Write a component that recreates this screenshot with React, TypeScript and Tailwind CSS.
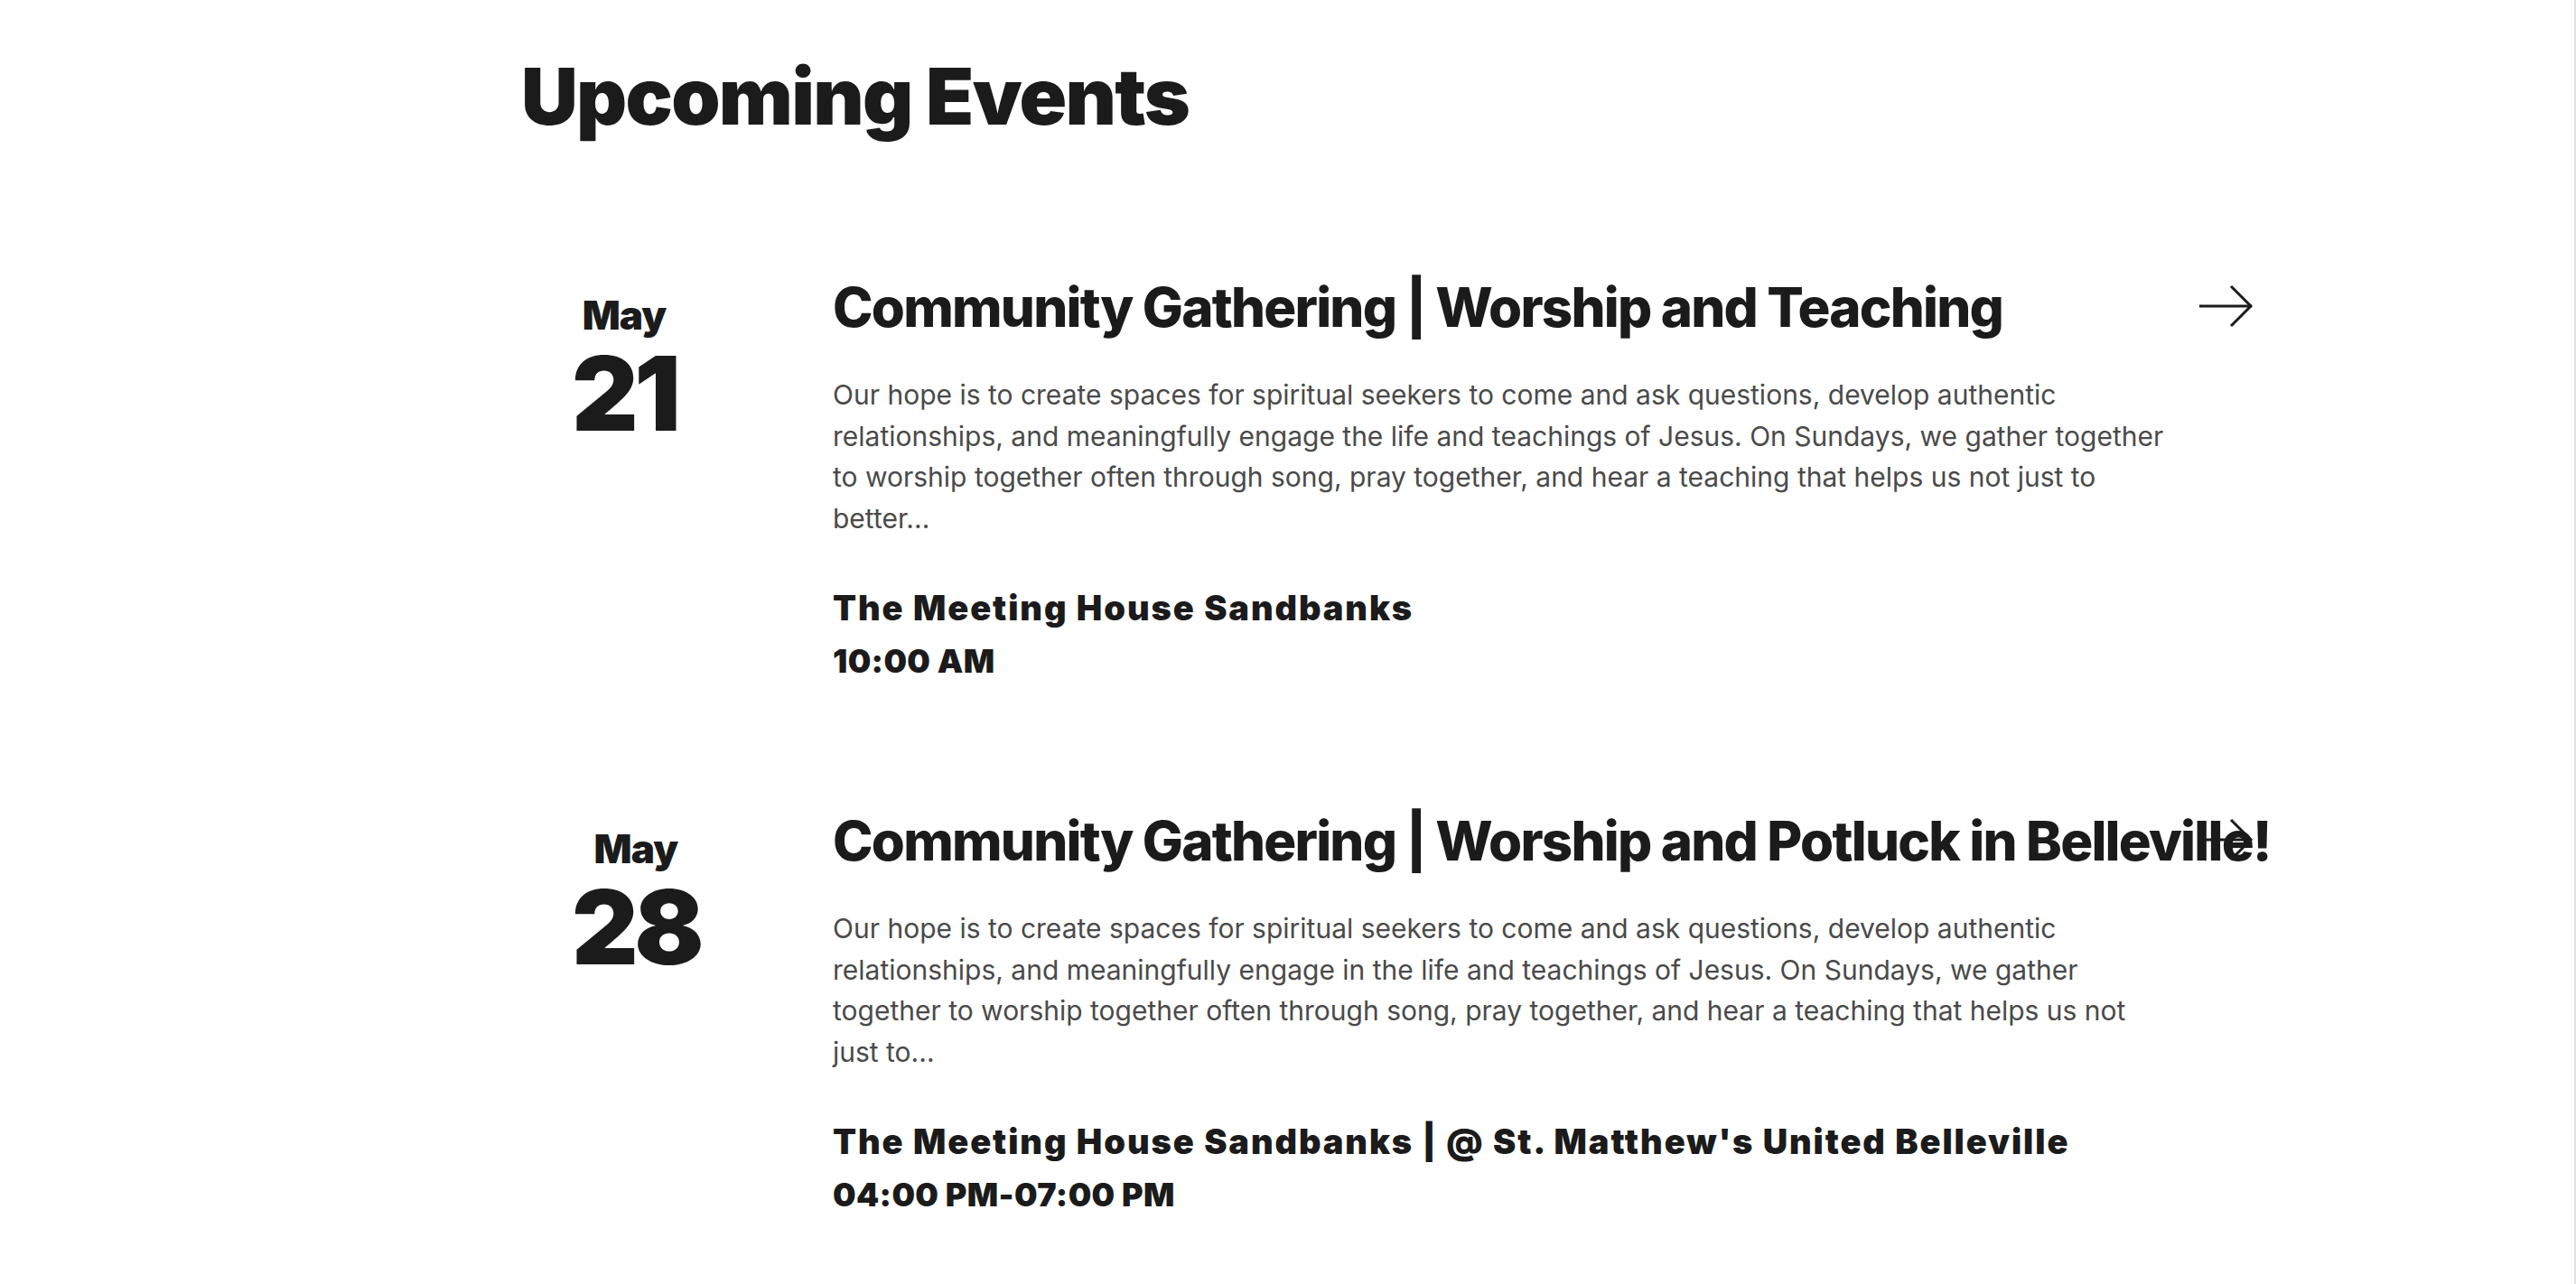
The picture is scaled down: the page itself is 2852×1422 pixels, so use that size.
import React from "react";

const events = [
  {
    month: "May",
    day: "21",
    title: "Community Gathering | Worship and Teaching",
    body: "Our hope is to create spaces for spiritual seekers to come and ask questions, develop authentic relationships, and meaningfully engage the life and teachings of Jesus. On Sundays, we gather together to worship together often through song, pray together, and hear a teaching that helps us not just to better...",
    place: "The Meeting House Sandbanks",
    time: "10:00 AM",
  },
  {
    month: "May",
    day: "28",
    title: "Community Gathering | Worship and Potluck in Belleville!",
    body: "Our hope is to create spaces for spiritual seekers to come and ask questions, develop authentic relationships, and meaningfully engage in the life and teachings of Jesus. On Sundays, we gather together to worship together often through song, pray together, and hear a teaching that helps us not just to...",
    place: "The Meeting House Sandbanks | @ St. Matthew's United Belleville",
    time: "04:00 PM-07:00 PM",
  },
];

function Arrow() {
  return (
    <svg width="62" height="46" viewBox="0 0 62 46" fill="none" stroke="#1b1b1b" strokeWidth="3">
      <path d="M1 23 H59" />
      <path d="M36 1 L58 23 L36 45" />
    </svg>
  );
}

export default function App() {
  return (
    <div className="min-h-screen bg-white border-r-2 border-[#e2e2e2] font-['Inter',sans-serif] text-[#1b1b1b]">
      <div className="pl-[577px] pr-[354px] pt-[63px] pb-[60px]">
        <h1 className="text-[87px] font-black leading-none tracking-[-0.02em]">Upcoming Events</h1>

        <ul className="mt-[160px] flex flex-col gap-[151px]">
          {events.map((e) => (
            <li key={e.day} className="relative flex">
              <div className="w-[345px] shrink-0 pl-[56px] pt-[17px]">
                <div className="inline-flex flex-col items-center">
                  <span className="text-[44px] font-black leading-none tracking-[-0.02em]">{e.month}</span>
                  <span className="mt-[8px] text-[114px] font-black leading-none tracking-[-0.04em]">{e.day}</span>
                </div>
              </div>
              <div className="flex-1">
                <h2 className="whitespace-nowrap text-[60px] font-extrabold leading-none tracking-[-0.03em]">{e.title}</h2>
                <p className="mt-[45px] max-w-[1480px] text-[30px] leading-[45.5px] text-[#4a4a4a]">{e.body}</p>
                <p className="mt-[57px] text-[38px] font-black leading-none tracking-[0.05em]">{e.place}</p>
                <p className="mt-[22px] text-[36px] font-black leading-none tracking-[0.01em]">{e.time}</p>
              </div>
              <div className="absolute right-0 top-[6px]">
                <Arrow />
              </div>
            </li>
          ))}
        </ul>
      </div>
    </div>
  );
}
